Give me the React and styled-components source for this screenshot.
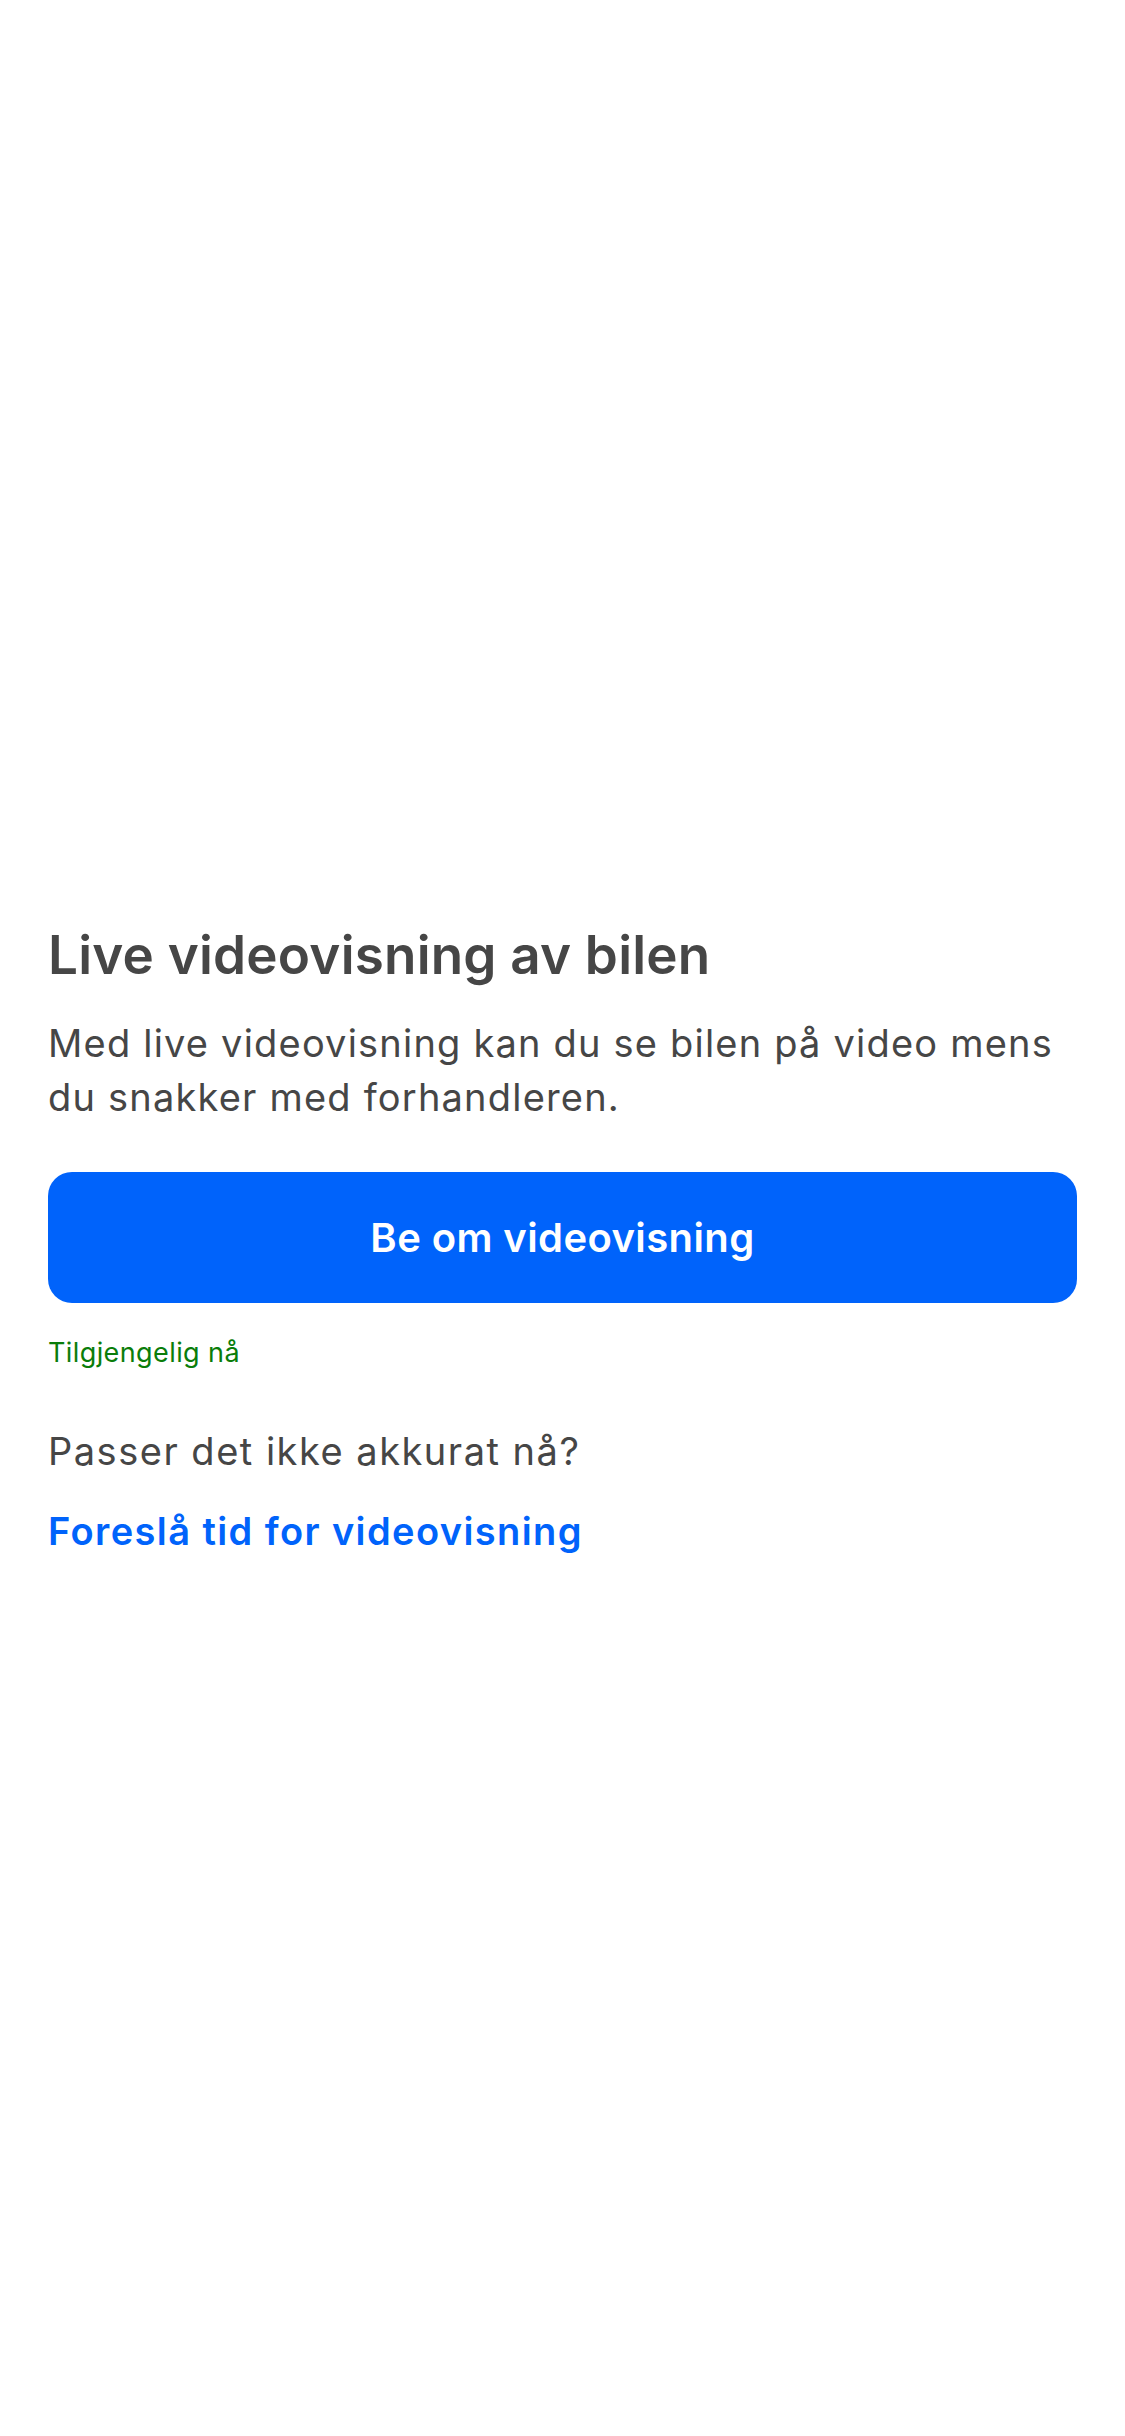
import styled, { createGlobalStyle } from 'styled-components';

const GlobalStyle = createGlobalStyle`
  html, body {
    margin: 0;
    padding: 0;
    background: #ffffff;
  }
  body {
    font-family: Inter, "Noto Sans", sans-serif;
    color: #464646;
  }
`;

const Page = styled.div`
  min-height: 2436px;
  box-sizing: border-box;
  padding: 922px 48px 0;
  display: flex;
  flex-direction: column;
`;

const Title = styled.h1`
  margin: 0;
  font-size: 53px;
  line-height: 66px;
  font-weight: 600;
  letter-spacing: 0.2px;
  color: #464646;
`;

const Text = styled.p`
  margin: ${(props) => props.$mt || '0'} 0 0;
  font-size: 38px;
  line-height: 54px;
  font-weight: 400;
  letter-spacing: ${(props) => props.$spacing || '1.2px'};
  color: #464646;
`;

const PrimaryButton = styled.button`
  margin-top: 48px;
  height: 131px;
  width: 100%;
  border: none;
  border-radius: 24px;
  background: #0063fb;
  color: #ffffff;
  font-family: inherit;
  font-size: 40px;
  font-weight: 600;
  letter-spacing: 0.4px;
  cursor: pointer;
`;

const Status = styled.span`
  margin-top: 32px;
  font-size: 27px;
  line-height: 36px;
  letter-spacing: 0.4px;
  color: #0a7d0a;
`;

const Link = styled.a`
  margin-top: 26px;
  font-size: 38px;
  line-height: 54px;
  font-weight: 600;
  letter-spacing: 1.4px;
  color: #0063fb;
  text-decoration: none;
`;

export default function App() {
  return (
    <>
      <GlobalStyle />
      <Page>
        <Title>Live videovisning av bilen</Title>
        <Text $mt="28px">
          Med live videovisning kan du se bilen på video mens du snakker med forhandleren.
        </Text>
        <PrimaryButton>Be om videovisning</PrimaryButton>
        <Status>Tilgjengelig nå</Status>
        <Text $mt="53px" $spacing="1.5px">
          Passer det ikke akkurat nå?
        </Text>
        <Link href="#">Foreslå tid for videovisning</Link>
      </Page>
    </>
  );
}
